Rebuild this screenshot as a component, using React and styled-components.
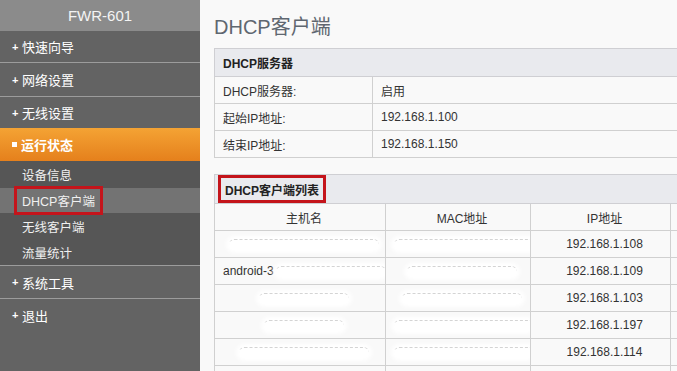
import React from "react";
import styled, { createGlobalStyle } from "styled-components";

const Global = createGlobalStyle`
  html, body {
    margin: 0;
    padding: 0;
    overflow: hidden;
    background: #f9f9f9;
    font-family: "Liberation Sans", "Noto Sans CJK SC", sans-serif;
  }
`;

const Page = styled.div`
  display: flex;
  width: 677px;
  height: 371px;
  overflow: hidden;
`;

const Side = styled.div`
  width: 200px;
  flex-shrink: 0;
  background: #636363;
  display: flex;
  flex-direction: column;
`;

const Brand = styled.div`
  height: 31px;
  background: #8b8b8b;
  color: #f4f4f4;
  font-size: 15px;
  display: flex;
  align-items: center;
  justify-content: center;
`;

const MenuItem = styled.div`
  height: ${(p) => p.h || 33}px;
  box-sizing: border-box;
  border-bottom: ${(p) => (p.line ? "1px solid #9c9c9c" : "none")};
  display: flex;
  align-items: center;
  padding-left: 12px;
  color: #fff;
  font-size: 13px;
  gap: 3px;
`;

const Plus = styled.span`
  font-size: 11px;
  font-weight: bold;
  width: 7px;
`;

const Active = styled.div`
  height: 33px;
  background: linear-gradient(#f4a334, #e5801c);
  display: flex;
  align-items: center;
  padding-left: 12px;
  gap: 4px;
  color: #fff;
  font-size: 13px;
  font-weight: bold;
`;

const Square = styled.span`
  width: 5px;
  height: 5px;
  background: #fff;
`;

const SubList = styled.div`
  background: #565656;
  border-bottom: 1px solid #9c9c9c;
`;

const SubItem = styled.div`
  height: ${(p) => p.h || 26}px;
  display: flex;
  align-items: center;
  padding-left: 22px;
  color: #f0f0f0;
  font-size: 12.5px;
  background: ${(p) => (p.sel ? "#737373" : "transparent")};
`;

const RedBox = styled.span`
  margin-left: -8px;
  padding: 2px 5px;
  border: 3px solid #c4141b;
`;

const Main = styled.div`
  flex: 1;
  padding-left: 14px;
  min-width: 0;
`;

const Title = styled.div`
  height: 48px;
  box-sizing: border-box;
  padding-top: 15px;
  font-size: 20px;
  line-height: 24px;
  color: #5f6770;
`;

const Table = styled.table`
  border-collapse: collapse;
  width: ${(p) => p.w}px;
  table-layout: fixed;
  font-size: 12px;
  color: #333;
  margin-bottom: ${(p) => p.mb || 0}px;
`;

const HeadCell = styled.td`
  height: 27px;
  background: #e9eaee;
  border: 1px solid #cfcfd3;
  font-weight: bold;
  padding: 0 0 0 8px;
  color: #222;
`;

const Cell = styled.td`
  height: 26px;
  border: 1px solid #d0d0d0;
  padding: 0 0 0 8px;
  text-align: ${(p) => (p.center ? "center" : "left")};
  white-space: nowrap;
  overflow: hidden;
`;

const ListBox = styled.span`
  display: inline-block;
  margin-left: -5px;
  padding: 3px 4px 2px;
  border: 3px solid #c4141b;
`;

const Smudge = styled.span`
  display: inline-block;
  vertical-align: middle;
  width: ${(p) => p.w}px;
  height: 10px;
  border-radius: 6px;
  background: #fff;
  box-shadow: 0 0 4px 3px #fff;
  border-top: 1px dashed #d4d4d4;
  margin-left: ${(p) => p.ml || 0}px;
`;

const clients = [
  ["", 150, 150, "192.168.1.108"],
  ["android-3", 110, 110, "192.168.1.109"],
  ["", 90, 120, "192.168.1.103"],
  ["", 80, 140, "192.168.1.197"],
  ["", 130, 140, "192.168.1.114"],
  ["", 0, 0, ""],
];

export default function App() {
  return (
    <Page>
      <Global />
      <Side>
        <Brand>FWR-601</Brand>
        <MenuItem line h={32}><Plus>+</Plus>快速向导</MenuItem>
        <MenuItem line h={34}><Plus>+</Plus>网络设置</MenuItem>
        <MenuItem h={31}><Plus>+</Plus>无线设置</MenuItem>
        <Active><Square />运行状态</Active>
        <SubList>
          <SubItem h={27}>设备信息</SubItem>
          <SubItem sel h={25}><RedBox>DHCP客户端</RedBox></SubItem>
          <SubItem h={27}>无线客户端</SubItem>
          <SubItem h={25}>流量统计</SubItem>
        </SubList>
        <MenuItem line h={33}><Plus>+</Plus>系统工具</MenuItem>
        <MenuItem h={32}><Plus>+</Plus>退出</MenuItem>
      </Side>
      <Main>
        <Title>DHCP客户端</Title>
        <Table w={480} mb={16}>
          <colgroup>
            <col style={{ width: 158 }} />
            <col />
          </colgroup>
          <tbody>
            <tr><HeadCell colSpan={2}>DHCP服务器</HeadCell></tr>
            <tr><Cell>DHCP服务器:</Cell><Cell>启用</Cell></tr>
            <tr><Cell>起始IP地址:</Cell><Cell>192.168.1.100</Cell></tr>
            <tr><Cell>结束IP地址:</Cell><Cell>192.168.1.150</Cell></tr>
          </tbody>
        </Table>
        <Table w={480}>
          <colgroup>
            <col style={{ width: 171 }} />
            <col style={{ width: 145 }} />
            <col style={{ width: 140 }} />
            <col />
          </colgroup>
          <tbody>
            <tr><HeadCell colSpan={4}><ListBox>DHCP客户端列表</ListBox></HeadCell></tr>
            <tr>
              <Cell center>主机名</Cell>
              <Cell center>MAC地址</Cell>
              <Cell center>IP地址</Cell>
              <Cell />
            </tr>
            {clients.map(([name, hw, mw, ip], i) => (
              <tr key={i}>
                <Cell center={!name}>
                  {name}
                  {hw > 0 && <Smudge w={hw} ml={name ? 2 : 0} />}
                </Cell>
                <Cell center>{mw > 0 && <Smudge w={mw} />}</Cell>
                <Cell center>{ip}</Cell>
                <Cell />
              </tr>
            ))}
          </tbody>
        </Table>
      </Main>
    </Page>
  );
}
